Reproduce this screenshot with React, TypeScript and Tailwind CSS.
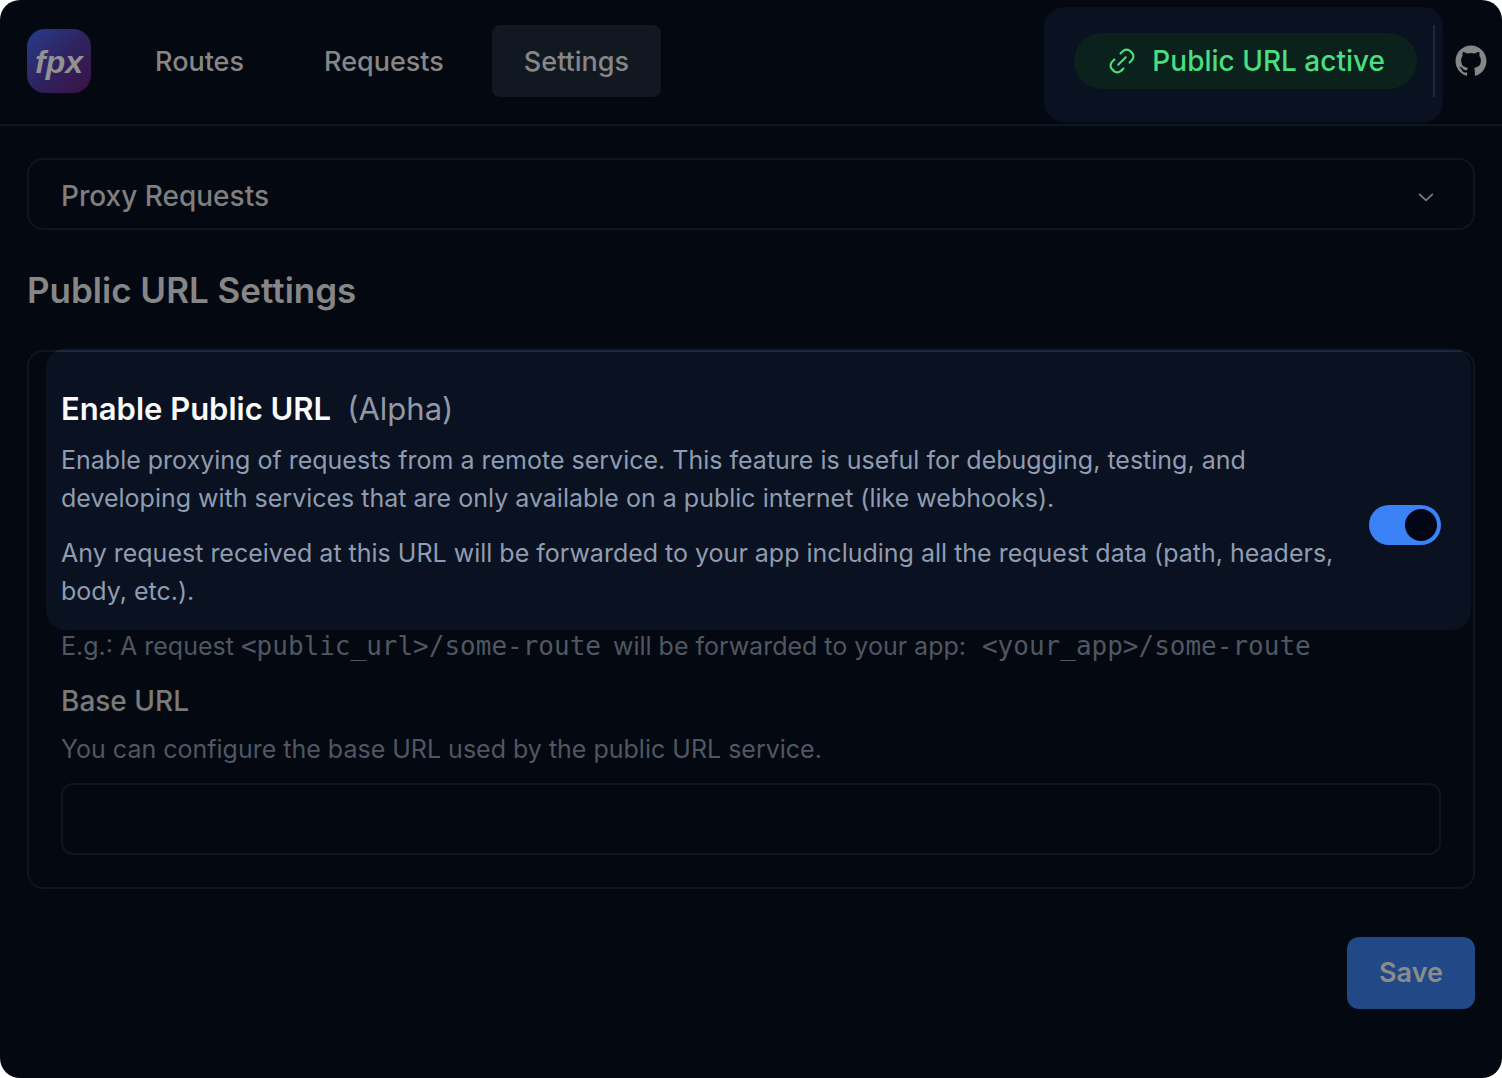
import { useState } from "react";
import { RxChevronDown, RxGithubLogo, RxLink2 } from "react-icons/rx";

const navItems = [
  { label: "Routes", active: false },
  { label: "Requests", active: false },
  { label: "Settings", active: true },
];

function Header() {
  return (
    <header className="flex h-[126px] items-start justify-between border-b-2 border-[#10151f] pl-[27px] pr-[15px]">
      <div className="flex items-center pt-[25px]">
        <a
          href="#home"
          aria-label="fpx home"
          className="mr-8 flex size-16 items-center justify-center rounded-[18px] bg-linear-to-br from-[#253c8a] via-[#2e2361] to-[#3a0f42] pt-0.5 font-['Liberation_Sans',sans-serif] text-[32px] leading-8 font-bold text-[#929292] italic"
        >
          fpx
        </a>
        <nav className="flex gap-4 text-[27px]">
          {navItems.map((item) => (
            <a
              key={item.label}
              href={`#${item.label.toLowerCase()}`}
              aria-current={item.active ? "page" : undefined}
              className={
                item.active
                  ? "flex h-[72px] items-center rounded-lg bg-[#111821] px-8 pt-0.5"
                  : "flex h-[72px] items-center rounded-lg px-8 pt-0.5"
              }
            >
              {item.label}
            </a>
          ))}
        </nav>
      </div>
      <div className="flex items-center pt-[7px]">
        <div className="mr-3 flex h-[115px] items-center gap-4 rounded-[20px] bg-[#0a1120] pr-2 pb-2 pl-[30px]">
          <div className="flex h-14 items-center gap-3.5 rounded-full bg-[#0a211c] px-8 text-[#4ade80]">
            <RxLink2 className="size-8" />
            Public URL active
          </div>
          <div className="h-[72px] w-0.5 bg-[#1e293b]" />
        </div>
        <a href="#github" aria-label="GitHub" className="mb-2">
          <RxGithubLogo className="size-8" />
        </a>
      </div>
    </header>
  );
}

export default function App() {
  const [enabled, setEnabled] = useState(true);
  const [baseUrl, setBaseUrl] = useState("");

  return (
    <div className="min-h-screen bg-white font-['Inter',sans-serif]">
      <div className="min-h-screen rounded-[20px] bg-[#040810] text-[28px] leading-10 font-medium text-[#868686]">
        <Header />
        <main className="px-[27px] pt-8 pb-[69px]">
          <button
            type="button"
            aria-expanded="false"
            className="flex h-[72px] w-full items-center justify-between rounded-2xl border-2 border-[#10151f] pt-1 pr-[35px] pl-8 text-[#7f7f7f]"
          >
            Proxy Requests
            <RxChevronDown className="size-6" />
          </button>

          <h2 className="my-9 text-[35px] leading-[48px] font-semibold text-[#868686]">
            Public URL Settings
          </h2>

          <form onSubmit={(event) => event.preventDefault()}>
            <div className="rounded-2xl border-2 border-[#10151f] p-8">
              <div className="relative flex items-center justify-between gap-4">
                <div className="absolute -top-9 -right-[30px] bottom-[35px] -left-[15px] overflow-hidden rounded-[20px] bg-[#0a1120] pt-0.5">
                  <div className="h-0.5 bg-[#1c2739]" />
                </div>
                <div className="relative text-[25px] leading-[38px] font-normal text-[#8f9cb1]">
                  <label
                    htmlFor="enable-public-url"
                    className="mb-2 flex gap-4 text-[31px] leading-[49px] font-semibold text-[#fafafa]"
                  >
                    Enable Public URL
                    <span className="font-normal text-[#9299a6]">(Alpha)</span>
                  </label>
                  <p>
                    Enable proxying of requests from a remote service. This
                    feature is useful for debugging, testing, and developing
                    with services that are only available on a public internet
                    (like webhooks).
                  </p>
                  <p className="mt-[17px]">
                    Any request received at this URL will be forwarded to your
                    app including all the request data (path, headers, body,
                    etc.).
                  </p>
                  <p className="mt-[17px] text-[#4f5763]">
                    E.g.: A request{" "}
                    <code className="mr-3 font-['DejaVu_Sans_Mono',monospace] text-[26px]">
                      &lt;public_url&gt;/some-route
                    </code>
                    will be forwarded to your app:
                    <code className="ml-4 font-['DejaVu_Sans_Mono',monospace] text-[26px]">
                      &lt;your_app&gt;/some-route
                    </code>
                  </p>
                </div>
                <input
                  id="enable-public-url"
                  type="checkbox"
                  role="switch"
                  checked={enabled}
                  onChange={(event) => setEnabled(event.target.checked)}
                  className="relative h-10 w-[72px] shrink-0 appearance-none rounded-full bg-[#1e293b] p-1 before:block before:size-8 before:rounded-full before:bg-[#020617] checked:bg-[#3b82f6] checked:before:ml-8"
                />
              </div>

              <label htmlFor="base-url" className="mt-4 block text-[#7a7a7a]">
                Base URL
              </label>
              <p
                id="base-url-help"
                className="mt-[9px] text-[25px] leading-[38px] font-normal text-[#4f5763]"
              >
                You can configure the base URL used by the public URL service.
              </p>
              <input
                id="base-url"
                type="text"
                aria-describedby="base-url-help"
                value={baseUrl}
                onChange={(event) => setBaseUrl(event.target.value)}
                className="mt-[15px] block h-[72px] w-full rounded-xl border-2 border-[#10151f] bg-transparent px-6"
              />
            </div>
            <div className="mt-12 flex justify-end">
              <button
                type="submit"
                className="h-[72px] rounded-xl bg-[#214887] px-8 text-[27px] font-semibold text-[#8c8c8c]"
              >
                Save
              </button>
            </div>
          </form>
        </main>
      </div>
    </div>
  );
}
